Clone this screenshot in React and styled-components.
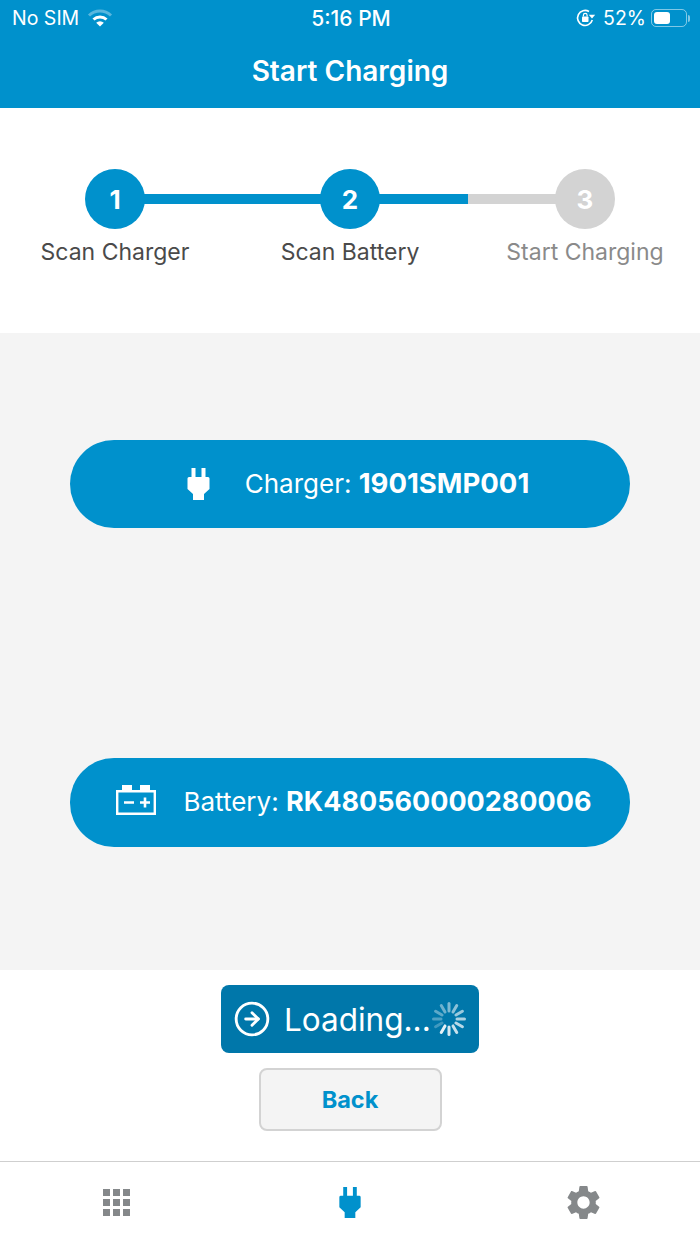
import React from "react";
import styled, { createGlobalStyle } from "styled-components";
import { CircleArrowRight } from "lucide-react";
import { MdSettings } from "react-icons/md";

const BLUE = "#0091cc";

const GlobalStyle = createGlobalStyle`
  html, body { margin: 0; padding: 0; background: #fff; }
  * { box-sizing: border-box; }
  body { font-family: Inter, "Noto Sans", sans-serif; }
`;

const PlugIcon = ({ color = "#fff", width = 23, height = 33 }) => (
  <svg width={width} height={height} viewBox="0 0 22 32" fill={color}>
    <path d="M4 0h4v9h6V0h4v9h2.500A1.500 1.500 0 0 1 22 10.500V21l-5.500 5V32h-11v-6L0 21V10.500A1.500 1.500 0 0 1 1.500 9H4z" />
  </svg>
);

const BatteryIcon = () => (
  <BatterySvg width="40" height="30" viewBox="0 0 40 30" fill="none" stroke="#fff">
    <path d="M1.200 6.200h37.600v22.600H1.200z" strokeWidth="2.400" />
    <path d="M6 0h10v5H6zM24 0h10v5H24z" fill="#fff" stroke="none" />
    <path d="M8 17.500h10M24 17.500h10M29 12.500v10" strokeWidth="2.600" />
  </BatterySvg>
);

const WifiIcon = () => (
  <svg width="26" height="20" viewBox="0 0 26 20" fill="none" stroke="#fff" strokeWidth="3">
    <path d="M2 7.500a16 16 0 0 1 22 0" opacity="0.35" />
    <path d="M6.500 11.500a9.500 9.500 0 0 1 13 0" />
    <path d="M13 18.500l-3.800-3.800a5.400 5.400 0 0 1 7.600 0z" fill="#fff" stroke="none" />
  </svg>
);

const OrientationIcon = () => (
  <OrientationSvg width="20" height="20" viewBox="0 0 20 20" fill="none" stroke="#fff" strokeWidth="1.600">
    <path d="M16.300 12A7.500 7.500 0 1 1 13 3.500" />
    <path d="M12.800 6.800h6.400l-3.200 3.800z" fill="#fff" stroke="none" />
    <rect x="6" y="8.500" width="6.500" height="5.500" rx="0.800" fill="#fff" stroke="none" />
    <path d="M7.400 8.500V7.300a1.850 1.850 0 0 1 3.700 0v1.200" strokeWidth="1.200" />
  </OrientationSvg>
);

const Spinner = () => (
  <SpinnerSvg width="36" height="36" viewBox="0 0 36 36">
    {Array.from({ length: 12 }).map((_, i) => (
      <line
        key={i}
        x1="18"
        y1="2.500"
        x2="18"
        y2="10"
        stroke="#fff"
        strokeWidth="3"
        strokeLinecap="round"
        opacity={0.25 + (((i + 4) % 12) / 11) * 0.65}
        transform={`rotate(${i * 30} 18 18)`}
      />
    ))}
  </SpinnerSvg>
);

const GridIcon = () => (
  <Grid>
    {Array.from({ length: 9 }).map((_, i) => (
      <GridCell key={i} />
    ))}
  </Grid>
);

const steps = [
  { n: 1, label: "Scan Charger", done: true },
  { n: 2, label: "Scan Battery", done: true },
  { n: 3, label: "Start Charging", done: false },
];

export default function App() {
  return (
    <Page>
      <GlobalStyle />
      <Header>
        <StatusBar>
          <StatusSide>
            No SIM <WifiIcon />
          </StatusSide>
          <Clock>5:16 PM</Clock>
          <StatusSide $right>
            <OrientationIcon />
            <span>52%</span>
            <Battery>
              <BatteryFill />
            </Battery>
            <BatteryCap />
          </StatusSide>
        </StatusBar>
        <Title>Start Charging</Title>
      </Header>

      <Stepper>
        <Track>
          <TrackFill />
        </Track>
        {steps.map((s) => (
          <Step key={s.n}>
            <Circle $done={s.done}>{s.n}</Circle>
            <StepLabel $done={s.done}>{s.label}</StepLabel>
          </Step>
        ))}
      </Stepper>

      <Main>
        <Pill $height={88} $gap={35} $shift={16}>
          <PlugIcon height={32} />
          <PillText $bold={27.5}>
            Charger: <b>1901SMP001</b>
          </PillText>
        </Pill>
        <Pill $height={89} $gap={27} $shift={8}>
          <BatteryIcon />
          <PillText $bold={27}>
            Battery: <b>RK480560000280006</b>
          </PillText>
        </Pill>
      </Main>

      <Actions>
        <LoadingButton>
          <CircleArrowRight size={38} strokeWidth={1.8} color="#fff" />
          <LoadingText>Loading...</LoadingText>
          <Spinner />
        </LoadingButton>
        <BackButton>Back</BackButton>
      </Actions>

      <TabBar>
        <Tab>
          <GridIcon />
        </Tab>
        <Tab>
          <PlugIcon color={BLUE} width={22} height={31} />
        </Tab>
        <Tab>
          <MdSettings size={41} color="#85888a" />
        </Tab>
      </TabBar>
    </Page>
  );
}

const Page = styled.div`
  width: 700px;
  height: 1244px;
  display: flex;
  flex-direction: column;
  overflow: hidden;
`;

const Header = styled.header`
  height: 108px;
  flex: none;
  background: ${BLUE};
  color: #fff;
`;

const StatusBar = styled.div`
  height: 36px;
  padding: 0 10px 0 12px;
  display: grid;
  grid-template-columns: 1fr auto 1fr;
  align-items: center;
  font-size: 19.500px;
`;

const StatusSide = styled.div`
  display: flex;
  align-items: center;
  gap: ${(p) => (p.$right ? "9px" : "8px")};
  justify-content: ${(p) => (p.$right ? "flex-end" : "flex-start")};
`;

const OrientationSvg = styled.svg`
  margin-right: -2px;
`;

const Clock = styled.div`
  font-size: 21px;
  font-weight: 500;
`;

const Battery = styled.div`
  width: 36px;
  height: 18px;
  margin-left: -4px;
  padding: 2px;
  border: 1.500px solid rgba(255, 255, 255, 0.5);
  border-radius: 5px;
`;

const BatteryFill = styled.div`
  width: 52%;
  height: 100%;
  background: #fff;
  border-radius: 3px;
`;

const BatteryCap = styled.div`
  width: 2px;
  height: 7px;
  margin-left: -8px;
  background: rgba(255, 255, 255, 0.5);
  border-radius: 0 2px 2px 0;
`;

const Title = styled.h1`
  margin: 0;
  height: 70px;
  display: flex;
  align-items: center;
  justify-content: center;
  font-size: 28px;
  font-weight: 600;
`;

const Stepper = styled.section`
  position: relative;
  height: 225px;
  flex: none;
  padding-top: 61px;
  display: flex;
  justify-content: center;
  background: #fff;
`;

const Track = styled.div`
  position: absolute;
  top: 86px;
  left: 115px;
  width: 470px;
  height: 10px;
  background: #d3d3d3;
`;

const TrackFill = styled.div`
  width: 75%;
  height: 100%;
  background: ${BLUE};
`;

const Step = styled.div`
  position: relative;
  flex: 0 0 235px;
  display: flex;
  flex-direction: column;
  align-items: center;
`;

const Circle = styled.div`
  width: 60px;
  height: 60px;
  border-radius: 50%;
  display: flex;
  align-items: center;
  justify-content: center;
  color: #fff;
  font-size: 26px;
  font-weight: 700;
  background: ${(p) => (p.$done ? BLUE : "#d3d3d3")};
`;

const StepLabel = styled.div`
  margin-top: 9px;
  font-size: 23px;
  line-height: 28px;
  white-space: nowrap;
  color: ${(p) => (p.$done ? "#4a4a4a" : "#8a8a8a")};
`;

const Main = styled.main`
  height: 637px;
  flex: none;
  padding: 107px 70px 0;
  display: flex;
  flex-direction: column;
  gap: 230px;
  background: #f4f4f4;
`;

const Pill = styled.div`
  height: ${(p) => p.$height}px;
  flex: none;
  border-radius: 44px;
  background: ${BLUE};
  color: #fff;
  display: flex;
  align-items: center;
  justify-content: center;
  gap: ${(p) => p.$gap}px;
  padding-left: ${(p) => p.$shift}px;
`;

const BatterySvg = styled.svg`
  margin-top: -5px;
`;

const PillText = styled.div`
  font-size: 26px;
  margin-top: -2px;
  white-space: nowrap;
  b {
    font-size: ${(p) => p.$bold}px;
    font-weight: 700;
  }
`;

const Actions = styled.section`
  height: 191px;
  flex: none;
  padding-top: 15px;
  display: flex;
  flex-direction: column;
  align-items: center;
  gap: 15px;
  background: #fff;
`;

const LoadingButton = styled.button`
  width: 258px;
  height: 68px;
  flex: none;
  padding: 0 12px;
  border: none;
  border-radius: 8px;
  background: #0077aa;
  color: #fff;
  display: flex;
  align-items: center;
  font-family: inherit;
`;

const LoadingText = styled.span`
  margin-left: 13px;
  font-size: 31.500px;
  font-weight: 400;
`;

const SpinnerSvg = styled.svg`
  margin-left: auto;
  flex: none;
`;

const BackButton = styled.button`
  width: 183px;
  height: 63px;
  flex: none;
  border: 2px solid #d3d3d3;
  border-radius: 8px;
  background: #f4f4f4;
  color: ${BLUE};
  font-family: inherit;
  font-size: 23.500px;
  font-weight: 700;
`;

const TabBar = styled.nav`
  height: 83px;
  flex: none;
  padding-bottom: 2px;
  display: grid;
  grid-template-columns: repeat(3, 1fr);
  border-top: 1px solid #cfcfcf;
  background: #fff;
`;

const Tab = styled.div`
  display: flex;
  align-items: center;
  justify-content: center;
`;

const Grid = styled.div`
  display: grid;
  grid-template-columns: repeat(3, 7px);
  grid-auto-rows: 7px;
  gap: 3px;
`;

const GridCell = styled.div`
  background: #85888a;
`;
